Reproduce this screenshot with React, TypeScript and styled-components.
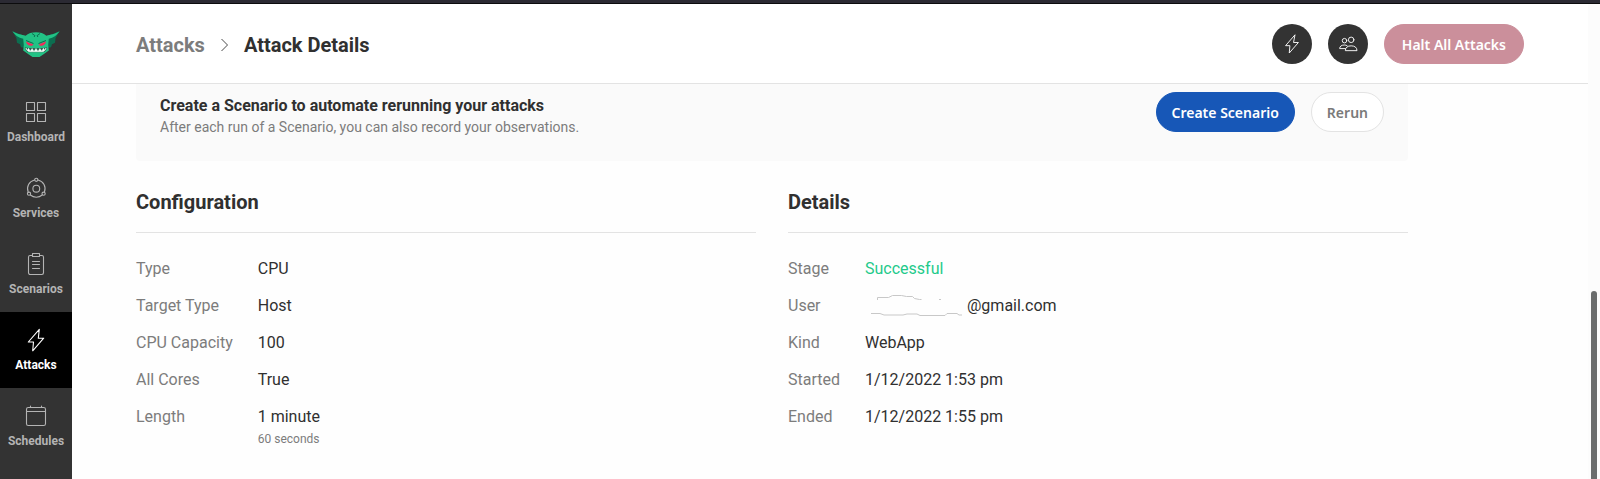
import React from 'react';
import styled, { createGlobalStyle } from 'styled-components';

const GlobalStyle = createGlobalStyle`
  * { box-sizing: border-box; }
  html, body, h1, h2, p, dl, dd, ul { margin: 0; padding: 0; }
  body {
    background: #fefefe;
    color: #303030;
    font-family: Roboto, "Liberation Sans", sans-serif;
    font-size: 16px;
    line-height: 24px;
  }
  #root { min-height: 100vh; display: flex; flex-direction: column; }
`;

const TopStrip = styled.div`
  height: 4px;
  background: #2b2a33;
  border-bottom: 1px solid #0c0c0d;
`;

const Shell = styled.div`
  flex: 1;
  display: flex;
`;

const Sidebar = styled.nav`
  width: 72px;
  flex: none;
  background: #333333;
`;

const LogoLink = styled.a`
  height: 80px;
  display: flex;
  align-items: center;
  justify-content: center;
`;

const NavList = styled.ul`
  list-style: none;
`;

const NavLink = styled.a<{ $active?: boolean }>`
  height: 76px;
  padding-top: 16px;
  display: flex;
  flex-direction: column;
  align-items: center;
  gap: 5px;
  background: ${(p) => (p.$active ? '#000000' : 'transparent')};
  color: ${(p) => (p.$active ? '#ffffff' : '#b4b4b4')};
  font-size: 12px;
  font-weight: 700;
  line-height: 16px;
  text-decoration: none;
`;

const Page = styled.div`
  flex: 1;
  min-width: 0;
`;

const Header = styled.header`
  display: flex;
  align-items: center;
  justify-content: space-between;
  padding: 20px 64px 19px;
  background: #ffffff;
  border-bottom: 1px solid #e3e3e3;
`;

const Breadcrumb = styled.div`
  display: flex;
  align-items: center;
  gap: 15px;
  padding-top: 2px;
  font-size: 20px;
  font-weight: 700;
`;

const CrumbLink = styled.a`
  color: #7c7c7c;
  text-decoration: none;
`;

const PageTitle = styled.h1`
  font-size: 20px;
  font-weight: 700;
`;

const Actions = styled.div`
  display: flex;
  align-items: center;
  gap: 16px;
`;

const RoundButton = styled.button`
  width: 40px;
  height: 40px;
  padding: 0;
  display: flex;
  align-items: center;
  justify-content: center;
  border: 0;
  border-radius: 50%;
  background: #333333;
  color: #ffffff;
`;

type Tone = 'danger' | 'primary' | 'plain';
const tones: Record<Tone, string> = {
  danger: 'padding: 2px 17px 0; background: #cb8f9b; color: #ffffff; border-color: #cb8f9b;',
  primary: 'background: #1757b7; color: #ffffff; border-color: #1757b7;',
  plain: 'background: #ffffff; color: #7a7a7a; border-color: #e3e3e3;',
};

const PillButton = styled.button<{ $tone: Tone }>`
  height: 40px;
  padding: 2px 15px 0;
  border: 1px solid;
  border-radius: 20px;
  font-family: "Noto Sans", "Open Sans", sans-serif;
  font-size: 14px;
  font-weight: 600;
  line-height: 20px;
  ${(p) => tones[p.$tone]}
`;

const Content = styled.main`
  max-width: 1400px;
  padding: 0 64px 24px;
`;

const Banner = styled.section`
  display: flex;
  align-items: flex-start;
  justify-content: space-between;
  padding: 8px 24px 26px;
  background: #fafafa;
  border-radius: 0 0 4px 4px;
`;

const BannerCopy = styled.div`
  padding-top: 1px;
`;

const BannerTitle = styled.h2`
  font-size: 16px;
  font-weight: 700;
  line-height: 26px;
`;

const BannerText = styled.p`
  color: #7c7c7c;
  font-size: 14px;
  line-height: 16px;
`;

const Columns = styled.div`
  display: grid;
  grid-template-columns: 1fr 1fr;
  gap: 32px;
  margin-top: 27px;
`;

const SectionTitle = styled.h2`
  padding-bottom: 16px;
  border-bottom: 1px solid #e3e3e3;
  font-size: 20px;
  font-weight: 700;
  line-height: 28px;
`;

const Facts = styled.dl`
  display: grid;
  grid-template-columns: auto 1fr;
  gap: 13px 25px;
  margin-top: 24px;
`;

const Term = styled.dt`
  color: #7c7c7c;
`;

const Value = styled.dd<{ $success?: boolean }>`
  color: ${(p) => (p.$success ? '#1fca8b' : '#303030')};
`;

const Note = styled.div`
  color: #7c7c7c;
  font-size: 12px;
  line-height: 20px;
`;

const Email = styled.span`
  display: flex;
  align-items: center;
`;

const Gutter = styled.div`
  width: 12px;
  flex: none;
  display: flex;
  flex-direction: column;
  padding: 0 3px;
  background: #fcfcfc;
  &::before {
    content: "";
    flex: 287 0 0;
  }
`;

const Thumb = styled.div`
  flex: 188 0 0;
  border-radius: 3px 3px 0 0;
  background: #6b6d6d;
`;

const Icon = ({ children, size = 24 }: { children: React.ReactNode; size?: number }) => (
  <svg width={size} height={size} viewBox="0 0 24 24" fill="none" stroke="currentColor" strokeWidth="1.1" strokeLinejoin="round" strokeLinecap="round" aria-hidden="true">
    {children}
  </svg>
);

const Bolt = ({ size }: { size?: number }) => (
  <Icon size={size}>
    <path d="M15.300 1.300 4.300 14h5.200l-.8 8.800L19.700 10.200h-5.400z" />
  </Icon>
);

const DashboardIcon = () => (
  <Icon>
    <rect x="2.5" y="2.5" width="8" height="8" />
    <rect x="13.5" y="2.5" width="8" height="8" />
    <rect x="2.5" y="13.5" width="8" height="8" />
    <rect x="13.5" y="13.5" width="8" height="8" />
  </Icon>
);

const ServicesIcon = () => (
  <Icon>
    <circle cx="12.3" cy="12.7" r="3.4" />
    <circle cx="12.3" cy="3.8" r="1.6" />
    <circle cx="5" cy="17.700" r="1.600" />
    <circle cx="19.600" cy="17.700" r="1.600" />
    <path d="M10.600 4A9 9 0 0 0 4.200 16.200M14 4A9 9 0 0 1 20.400 16.200M6.400 19a9 9 0 0 0 11.800 0" />
  </Icon>
);

const ScenariosIcon = () => (
  <Icon>
    <path d="M8.3 3.5H6A1.6 1.6 0 0 0 4.5 5v15.8A1.7 1.7 0 0 0 6.2 22.5h11.6a1.7 1.7 0 0 0 1.7-1.7V5A1.6 1.6 0 0 0 18 3.5h-2.3" />
    <path d="M8.5 1.500h7v3h-7zM8.500 9.500h7M8.500 12.500h7M8.500 16.500h7" />
  </Icon>
);

const SchedulesIcon = () => (
  <Icon>
    <rect x="2.5" y="3.500" width="19" height="18" rx="1.800" />
    <path d="M2.500 7.500h19M6.500 2v1.500M17.500 2v1.500" />
  </Icon>
);

const PeopleIcon = () => (
  <Icon size={20}>
    <circle cx="7.800" cy="8" r="2.700" />
    <circle cx="15.800" cy="7" r="3.300" />
    <path d="M8.800 17.500H2c0-2.700 2.300-4.300 5.500-4.300 1.500 0 2.600.3 3.400.8" />
    <path d="M8.800 19.500c0-3.300 2.700-5.300 7-5.300s7 2 7 5.300z" />
  </Icon>
);

const Chevron = () => (
  <svg width="9" height="14" viewBox="0 0 9 14" fill="none" stroke="#4a4a4a" aria-hidden="true">
    <path d="m1.500 1 6 6-6 6" />
  </svg>
);

const Goblin = () => (
  <svg width="48" height="28" viewBox="0 0 48 28" aria-hidden="true">
    <path d="M.4 1.300 15 7l-1 11-5-.8-1-3-3-1.400L4.400 8z" fill="#0c6e50" />
    <path d="M47.600 1.300 33 7l1 11 5-.8 1-3 3-1.400.6-4.800z" fill="#0c6e50" />
    <path d="M.4 1.300c5 3 9 3.200 13.200 4.500C16 3.300 20 2.300 24 2.300s8 1 10.400 3.500C38.600 4.500 42.600 4.300 47.600 1.300c-3 4.300-6 6.200-10.800 7.500l-.6 6.200.6 5.500-5.600 4L27.500 27h-7l-3.700-2.500-5.600-4 .6-5.500-.6-6.200C6.400 7.500 3.400 5.600.4 1.300z" fill="#22c285" />
    <path d="m20 3.500 3 2.200-1 1.300M28 3.500l-3 2.200 1 1.300M14 10.500l7.500 3M34 10.500l-7.500 3" fill="none" stroke="#0c6e50" />
    <path d="M14 11.400l7.400 3c-1.400 2-6.400 2-7.400-3zM34 11.400l-7.400 3c1.400 2 6.400 2 7.400-3z" fill="#f5285a" />
    <path d="M13 17.300c4 1.200 18 1.200 22 0-.3 3-2 5-4.600 5H17.600c-2.600 0-4.300-2-4.600-5z" fill="#28604d" />
    <path d="m14 18 1.300 2.300 1.300-2 1.600 2.900 1.900-2.700 1.900 2.900 2-2.900 2 2.900 1.900-2.900 1.900 2.700 1.600-2.900 1.300 2 1.300-2.300c-.5 2-1.800 3.700-3.800 3.700H17.800c-2 0-3.300-1.700-3.800-3.700z" fill="#f4fffb" stroke="#f4fffb" strokeWidth=".5" />
  </svg>
);

/* Hand-drawn outline left where the local part of the address is hidden. */
const HiddenName = () => (
  <svg width="102" height="24" viewBox="0 0 102 24" fill="none" stroke="#c8c8c8" role="img" aria-label="Hidden name">
    <path d="M12.500 6V3.500h11l4-2h9l5 1h6l2 2 5 1h2M74 5.500h2" />
    <path d="M6 19.500h9l4 1.500h19l4-1h10l3 1.500h25l2-2h10l2 1.500h3" />
  </svg>
);

const navItems = [
  { label: 'Dashboard', icon: <DashboardIcon /> },
  { label: 'Services', icon: <ServicesIcon /> },
  { label: 'Scenarios', icon: <ScenariosIcon /> },
  { label: 'Attacks', icon: <Bolt />, active: true },
  { label: 'Schedules', icon: <SchedulesIcon /> },
];

const configuration = [
  { term: 'Type', value: 'CPU' },
  { term: 'Target Type', value: 'Host' },
  { term: 'CPU Capacity', value: '100' },
  { term: 'All Cores', value: 'True' },
  { term: 'Length', value: '1 minute', note: '60 seconds' },
];

export default function App() {
  return (
    <>
      <GlobalStyle />
      <TopStrip />
      <Shell>
        <Sidebar aria-label="Main">
          <LogoLink href="#" aria-label="Home"><Goblin /></LogoLink>
          <NavList>
            {navItems.map((item) => (
              <li key={item.label}>
                <NavLink href="#" $active={item.active} aria-current={item.active ? 'page' : undefined}>
                  {item.icon}
                  {item.label}
                </NavLink>
              </li>
            ))}
          </NavList>
        </Sidebar>
        <Page>
          <Header>
            <Breadcrumb>
              <CrumbLink href="#">Attacks</CrumbLink>
              <Chevron />
              <PageTitle>Attack Details</PageTitle>
            </Breadcrumb>
            <Actions>
              <RoundButton type="button" aria-label="Active attacks"><Bolt size={20} /></RoundButton>
              <RoundButton type="button" aria-label="Team"><PeopleIcon /></RoundButton>
              <PillButton type="button" $tone="danger">Halt All Attacks</PillButton>
            </Actions>
          </Header>
          <Content>
            <Banner>
              <BannerCopy>
                <BannerTitle>Create a Scenario to automate rerunning your attacks</BannerTitle>
                <BannerText>After each run of a Scenario, you can also record your observations.</BannerText>
              </BannerCopy>
              <Actions>
                <PillButton type="button" $tone="primary">Create Scenario</PillButton>
                <PillButton type="button" $tone="plain">Rerun</PillButton>
              </Actions>
            </Banner>
            <Columns>
              <section>
                <SectionTitle>Configuration</SectionTitle>
                <Facts>
                  {configuration.map((row) => (
                    <React.Fragment key={row.term}>
                      <Term>{row.term}</Term>
                      <Value>
                        {row.value}
                        {row.note && <Note>{row.note}</Note>}
                      </Value>
                    </React.Fragment>
                  ))}
                </Facts>
              </section>
              <section>
                <SectionTitle>Details</SectionTitle>
                <Facts>
                  <Term>Stage</Term>
                  <Value $success>Successful</Value>
                  <Term>User</Term>
                  <Value><Email><HiddenName />@gmail.com</Email></Value>
                  <Term>Kind</Term>
                  <Value>WebApp</Value>
                  <Term>Started</Term>
                  <Value>1/12/2022 1:53 pm</Value>
                  <Term>Ended</Term>
                  <Value>1/12/2022 1:55 pm</Value>
                </Facts>
              </section>
            </Columns>
          </Content>
        </Page>
        <Gutter aria-hidden="true"><Thumb /></Gutter>
      </Shell>
    </>
  );
}
